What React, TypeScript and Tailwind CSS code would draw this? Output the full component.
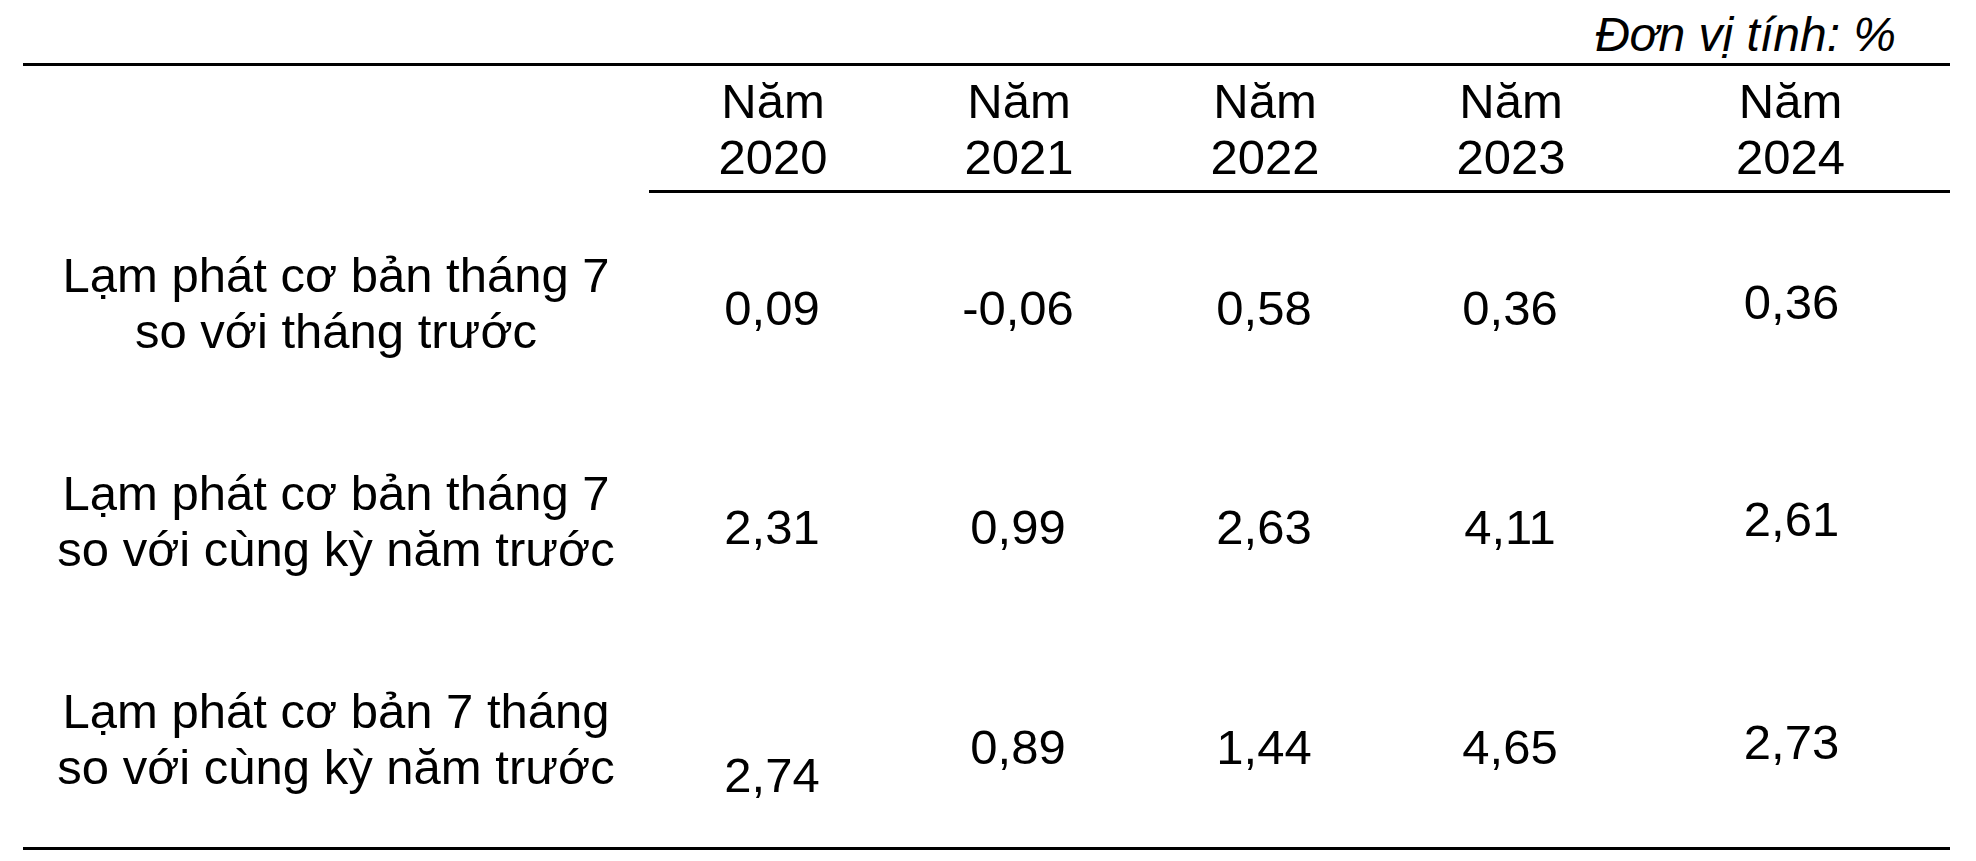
/**
 * Core inflation table (Lạm phát cơ bản tháng 7, 2020-2024)
 */

const years = ['2020', '2021', '2022', '2023', '2024'];

interface Row {
  label: [string, string];
  values: string[];
  shifts: string[];
}

const rows: Row[] = [
  {
    label: ['Lạm phát cơ bản tháng 7', 'so với tháng trước'],
    values: ['0,09', '-0,06', '0,58', '0,36', '0,36'],
    shifts: ['pt-[11px]', 'pt-[11px]', 'pt-[11px]', 'pt-[11px]', 'pb-[1px]'],
  },
  {
    label: ['Lạm phát cơ bản tháng 7', 'so với cùng kỳ năm trước'],
    values: ['2,31', '0,99', '2,63', '4,11', '2,61'],
    shifts: ['pt-[14px]', 'pt-[14px]', 'pt-[14px]', 'pt-[14px]', 'pb-[3px]'],
  },
  {
    label: ['Lạm phát cơ bản 7 tháng', 'so với cùng kỳ năm trước'],
    values: ['2,74', '0,89', '1,44', '4,65', '2,73'],
    shifts: ['pt-[74px]', 'pt-[18px]', 'pt-[18px]', 'pt-[18px]', 'pt-[8px]'],
  },
];

const App = () => {
  return (
    <div className="min-h-screen bg-white text-black font-['Liberation_Sans',Arial,sans-serif] text-[49px] leading-[56px]">
      <div className="ml-[23px] w-[1927px]">
        {/* Unit caption */}
        <div className="flex justify-end pt-[7px] pr-[54px] text-[48px] italic">Đơn vị tính: %</div>

        {/* Header */}
        <div className="grid grid-cols-[626px_246px_246px_246px_246px_1fr] border-t-[3px] border-black">
          <div />
          {years.map((y, i) => (
            <div
              key={y}
              className={`flex h-[127px] flex-col items-center justify-center border-b-[3px] border-black pt-[2px] text-center ${
                i === 4 ? 'pr-[2px]' : 'pl-[2px]'
              }`}
            >
              <span>Năm</span>
              <span>{y}</span>
            </div>
          ))}
        </div>

        {/* Body */}
        <div className="border-b-[3px] border-black">
          {rows.map((row, r) => (
            <div key={r} className="grid h-[218px] grid-cols-[626px_246px_246px_246px_246px_1fr]">
              <div className="flex flex-col items-center justify-center pt-[2px] text-center">
                <span>{row.label[0]}</span>
                <span>{row.label[1]}</span>
              </div>
              {row.values.map((v, i) => (
                <div key={i} className={`flex items-center justify-center ${row.shifts[i]}`}>
                  {v}
                </div>
              ))}
            </div>
          ))}
        </div>
      </div>
    </div>
  );
};

export default App;
